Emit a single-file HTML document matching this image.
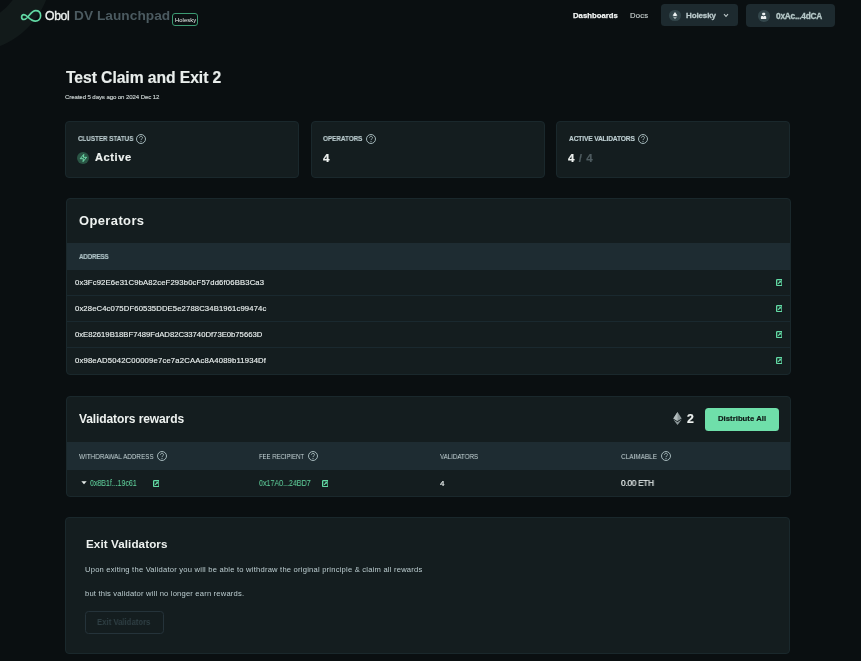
<!DOCTYPE html>
<html><head><meta charset="utf-8">
<style>
*{margin:0;padding:0;box-sizing:border-box}
html,body{width:861px;height:661px;overflow:hidden;background:#0a0f11;font-family:"Liberation Sans",sans-serif;color:#e6ecea}
.abs{position:absolute}
.arc{position:absolute;left:0;top:0;width:70px;height:70px;background:radial-gradient(circle at -31px -31px, rgba(0,0,0,0) 53px, #121a1a 54px, #121a1a 82.5px, rgba(0,0,0,0) 83.5px)}
.t{position:absolute;white-space:nowrap;line-height:1;will-change:transform}
.card{position:absolute;background:#141d1f;border:1px solid #1a282c;border-radius:4px}
.q{position:absolute;width:9.8px;height:9.8px;border:1px solid #b4c4c6;border-radius:50%}
.q:after{content:"?";position:absolute;left:0;right:0;top:1.2px;text-align:center;font-size:6.5px;line-height:1;color:#b4c4c6}
.thead{position:absolute;background:#1e2c32}
.sep{position:absolute;height:1px;background:#1a292f}
.ext{position:absolute;width:6.6px;height:6.6px;border:1.2px solid #5fd8a0;border-radius:1px}
.ext:after{content:"";position:absolute;left:0.3px;top:1.9px;width:4px;height:1.1px;background:#5fd8a0;transform:rotate(-45deg)}
</style></head><body>
<div class="arc"></div>

<svg class="abs" style="left:18px;top:6px" width="28" height="20" viewBox="0 0 28 20">
<path d="M9.8 11 C12 8.6 14.3 4.7 17.6 4.7 C20.6 4.7 22.6 6.8 22.6 9.8 C22.6 12.9 20.4 15.1 17.4 15.1 C14.2 15.1 12.2 13.2 9.8 11 C8.4 9.6 7.3 8.6 5.9 8.6 C4.5 8.6 3.6 9.7 3.6 11 C3.6 12.4 4.5 13.5 5.9 13.5 C7.4 13.5 8.5 12.4 9.8 11 Z" fill="none" stroke="#62d8a4" stroke-width="1.7"/>
</svg>
<div class="abs" style="left:172.2px;top:13px;width:26.2px;height:13.3px;border:1px solid #3c9a72;border-radius:3px"></div>

<div class="abs" style="left:661px;top:4.4px;width:77px;height:21.7px;background:#1d2a2f;border-radius:3.5px"></div>
<div class="abs" style="left:669px;top:9.6px;width:11.8px;height:11.8px;border-radius:50%;background:#33464b"></div>
<svg class="abs" style="left:672px;top:11px" width="6" height="9" viewBox="0 0 6 9"><path d="M3 0.9 L5.4 4.5 L3 5.2 L0.6 4.5Z" fill="#eef3f3"/><path d="M0.7 5.6 L3 6.3 L5.3 5.6 L3 8.2Z" fill="#a9b6b8"/></svg>
<svg class="abs" style="left:722.5px;top:13px" width="6" height="5" viewBox="0 0 6 5"><path d="M1 1.2 L3 3.4 L5 1.2" fill="none" stroke="#b9c5c6" stroke-width="1.1"/></svg>
<div class="abs" style="left:746px;top:4.4px;width:88.5px;height:22.6px;background:#1d2a2f;border-radius:4px"></div>
<div class="abs" style="left:758.2px;top:10.2px;width:11.5px;height:11.5px;border-radius:50%;background:#33464b"></div>
<svg class="abs" style="left:760px;top:12px" width="8" height="8" viewBox="0 0 8 8"><rect x="2.2" y="0.8" width="3" height="2.4" rx="0.8" fill="#e9efef"/><path d="M0.9 7 L0.9 5 Q0.9 4 1.9 4 L3 4 L3.55 4.7 L4.1 4 L5.2 4 Q6.2 4 6.2 5 L6.2 7 Z" fill="#e9efef"/></svg>

<div class="card" style="left:65px;top:121px;width:234px;height:57px"></div>
<svg class="abs" style="left:136.2px;top:134.0px" width="10" height="10" viewBox="0 0 10 10"><circle cx="5" cy="5" r="4.5" fill="none" stroke="#aabdc0" stroke-width="0.95"/><path d="M3.5 3.8 C3.5 2.9 4.2 2.3 5 2.3 C5.9 2.3 6.5 2.9 6.5 3.7 C6.5 4.8 5 4.9 5 6.1" fill="none" stroke="#aabdc0" stroke-width="0.9"/><circle cx="5" cy="7.6" r="0.55" fill="#aabdc0"/></svg>
<div class="abs" style="left:77.4px;top:152px;width:12px;height:12px;border-radius:50%;background:#2a5545"></div>
<svg class="abs" style="left:75px;top:150px" width="17" height="16" viewBox="0 0 17 16"><path d="M8.8 4.4 L5.2 8.7 L8.4 8.7 L8.05 11.6 L11.6 7.3 L8.4 7.3 Z" fill="none" stroke="#6fdcaa" stroke-width="1.0" stroke-linejoin="round"/></svg>
<div class="card" style="left:311px;top:121px;width:234px;height:57px"></div>
<svg class="abs" style="left:365.7px;top:134.0px" width="10" height="10" viewBox="0 0 10 10"><circle cx="5" cy="5" r="4.5" fill="none" stroke="#aabdc0" stroke-width="0.95"/><path d="M3.5 3.8 C3.5 2.9 4.2 2.3 5 2.3 C5.9 2.3 6.5 2.9 6.5 3.7 C6.5 4.8 5 4.9 5 6.1" fill="none" stroke="#aabdc0" stroke-width="0.9"/><circle cx="5" cy="7.6" r="0.55" fill="#aabdc0"/></svg>
<div class="card" style="left:556px;top:121px;width:234px;height:57px"></div>
<svg class="abs" style="left:638.0px;top:134.0px" width="10" height="10" viewBox="0 0 10 10"><circle cx="5" cy="5" r="4.5" fill="none" stroke="#aabdc0" stroke-width="0.95"/><path d="M3.5 3.8 C3.5 2.9 4.2 2.3 5 2.3 C5.9 2.3 6.5 2.9 6.5 3.7 C6.5 4.8 5 4.9 5 6.1" fill="none" stroke="#aabdc0" stroke-width="0.9"/><circle cx="5" cy="7.6" r="0.55" fill="#aabdc0"/></svg>

<div class="card" style="left:66px;top:198px;width:725px;height:176.5px"></div>
<div class="thead" style="left:67px;top:243.3px;width:723px;height:26.5px"></div>
<div class="sep" style="left:67px;top:295px;width:723px"></div>
<div class="sep" style="left:67px;top:321px;width:723px"></div>
<div class="sep" style="left:67px;top:347px;width:723px"></div>
<svg class="abs" style="left:775.6px;top:279.0px" width="6.6" height="7.2" viewBox="0 0 6.6 7.2"><rect x="0.65" y="0.65" width="5.3" height="5.9" rx="0.6" fill="none" stroke="#62d9a4" stroke-width="1.3"/><path d="M2.0 5.0 L4.4 2.5" stroke="#62d9a4" stroke-width="1.1"/><path d="M2.9 1.8 L5.0 1.8 L5.0 3.9 Z" fill="#62d9a4"/></svg>
<svg class="abs" style="left:775.6px;top:305.0px" width="6.6" height="7.2" viewBox="0 0 6.6 7.2"><rect x="0.65" y="0.65" width="5.3" height="5.9" rx="0.6" fill="none" stroke="#62d9a4" stroke-width="1.3"/><path d="M2.0 5.0 L4.4 2.5" stroke="#62d9a4" stroke-width="1.1"/><path d="M2.9 1.8 L5.0 1.8 L5.0 3.9 Z" fill="#62d9a4"/></svg>
<svg class="abs" style="left:775.6px;top:331.0px" width="6.6" height="7.2" viewBox="0 0 6.6 7.2"><rect x="0.65" y="0.65" width="5.3" height="5.9" rx="0.6" fill="none" stroke="#62d9a4" stroke-width="1.3"/><path d="M2.0 5.0 L4.4 2.5" stroke="#62d9a4" stroke-width="1.1"/><path d="M2.9 1.8 L5.0 1.8 L5.0 3.9 Z" fill="#62d9a4"/></svg>
<svg class="abs" style="left:775.6px;top:357.0px" width="6.6" height="7.2" viewBox="0 0 6.6 7.2"><rect x="0.65" y="0.65" width="5.3" height="5.9" rx="0.6" fill="none" stroke="#62d9a4" stroke-width="1.3"/><path d="M2.0 5.0 L4.4 2.5" stroke="#62d9a4" stroke-width="1.1"/><path d="M2.9 1.8 L5.0 1.8 L5.0 3.9 Z" fill="#62d9a4"/></svg>

<div class="card" style="left:66px;top:395.7px;width:725px;height:101px"></div>
<div class="thead" style="left:67px;top:442.2px;width:723px;height:27.8px"></div>
<svg class="abs" style="left:672.5px;top:412px" width="9" height="13" viewBox="0 0 9 13"><path d="M4.5 0 L8.7 6.6 L4.5 9 L0.3 6.6Z" fill="#8c9799"/><path d="M4.5 0 L4.5 9 L0.3 6.6Z" fill="#b3bdbe"/><path d="M0.3 7.5 L4.5 10 L8.7 7.5 L4.5 13Z" fill="#8c9799"/></svg>
<div class="abs" style="left:705.3px;top:407.9px;width:73.5px;height:23.2px;background:#6fdfaa;border-radius:3.5px"></div>
<svg class="abs" style="left:157.3px;top:451.4px" width="10" height="10" viewBox="0 0 10 10"><circle cx="5" cy="5" r="4.5" fill="none" stroke="#aabdc0" stroke-width="0.95"/><path d="M3.5 3.8 C3.5 2.9 4.2 2.3 5 2.3 C5.9 2.3 6.5 2.9 6.5 3.7 C6.5 4.8 5 4.9 5 6.1" fill="none" stroke="#aabdc0" stroke-width="0.9"/><circle cx="5" cy="7.6" r="0.55" fill="#aabdc0"/></svg>
<svg class="abs" style="left:308.0px;top:451.0px" width="10" height="10" viewBox="0 0 10 10"><circle cx="5" cy="5" r="4.5" fill="none" stroke="#aabdc0" stroke-width="0.95"/><path d="M3.5 3.8 C3.5 2.9 4.2 2.3 5 2.3 C5.9 2.3 6.5 2.9 6.5 3.7 C6.5 4.8 5 4.9 5 6.1" fill="none" stroke="#aabdc0" stroke-width="0.9"/><circle cx="5" cy="7.6" r="0.55" fill="#aabdc0"/></svg>
<svg class="abs" style="left:661.0px;top:451.0px" width="10" height="10" viewBox="0 0 10 10"><circle cx="5" cy="5" r="4.5" fill="none" stroke="#aabdc0" stroke-width="0.95"/><path d="M3.5 3.8 C3.5 2.9 4.2 2.3 5 2.3 C5.9 2.3 6.5 2.9 6.5 3.7 C6.5 4.8 5 4.9 5 6.1" fill="none" stroke="#aabdc0" stroke-width="0.9"/><circle cx="5" cy="7.6" r="0.55" fill="#aabdc0"/></svg>
<svg class="abs" style="left:81px;top:481px" width="6" height="3.5" viewBox="0 0 6 3.5"><path d="M0.3 0.3 L5.7 0.3 L3 3.2Z" fill="#e6ecea"/></svg>
<svg class="abs" style="left:152.7px;top:479.9px" width="6.6" height="7.2" viewBox="0 0 6.6 7.2"><rect x="0.65" y="0.65" width="5.3" height="5.9" rx="0.6" fill="none" stroke="#62d9a4" stroke-width="1.3"/><path d="M2.0 5.0 L4.4 2.5" stroke="#62d9a4" stroke-width="1.1"/><path d="M2.9 1.8 L5.0 1.8 L5.0 3.9 Z" fill="#62d9a4"/></svg>
<svg class="abs" style="left:321.6px;top:479.8px" width="6.6" height="7.2" viewBox="0 0 6.6 7.2"><rect x="0.65" y="0.65" width="5.3" height="5.9" rx="0.6" fill="none" stroke="#62d9a4" stroke-width="1.3"/><path d="M2.0 5.0 L4.4 2.5" stroke="#62d9a4" stroke-width="1.1"/><path d="M2.9 1.8 L5.0 1.8 L5.0 3.9 Z" fill="#62d9a4"/></svg>

<div class="card" style="left:65px;top:517px;width:725px;height:137px"></div>
<div class="abs" style="left:85.2px;top:610.5px;width:78.6px;height:23.5px;border:1px solid #25333a;border-radius:3.5px"></div>
<div class="t" id="obol" style="left:45.15px;top:9.66px;font-size:12.21px;color:#eef2f0;letter-spacing:-0.333px;font-weight:normal;-webkit-text-stroke:0.35px currentColor;">Obol</div>
<div class="t" id="dvl" style="left:74.04px;top:9.33px;font-size:13.66px;color:#4b5a60;letter-spacing:0.055px;font-weight:bold;">DV Launchpad</div>
<div class="t" id="badge" style="left:175.09px;top:18.08px;font-size:5.81px;color:#eef2f0;letter-spacing:0.100px;font-weight:normal;">Holesky</div>
<div class="t" id="dash" style="left:573.46px;top:11.78px;font-size:7.70px;color:#f2f5f4;letter-spacing:0.044px;font-weight:bold;-webkit-text-stroke:0.25px currentColor;">Dashboards</div>
<div class="t" id="docs" style="left:630.46px;top:11.78px;font-size:7.70px;color:#c7cfce;letter-spacing:0.233px;font-weight:normal;-webkit-text-stroke:0.15px currentColor;">Docs</div>
<div class="t" id="hol" style="left:686.44px;top:11.63px;font-size:7.99px;color:#b9c8ca;letter-spacing:-0.117px;font-weight:bold;-webkit-text-stroke:0.3px currentColor;">Holesky</div>
<div class="t" id="acct" style="left:775.87px;top:12.79px;font-size:8.28px;color:#b6c8c8;letter-spacing:-0.200px;font-weight:bold;-webkit-text-stroke:0.3px currentColor;">0xAc...4dCA</div>
<div class="t" id="title" style="left:65.90px;top:69.51px;font-size:15.70px;color:#e9eeec;letter-spacing:-0.065px;font-weight:bold;-webkit-text-stroke:0.15px currentColor;">Test Claim and Exit 2</div>
<div class="t" id="created" style="left:65.17px;top:94.33px;font-size:6.10px;color:#c9d1d0;letter-spacing:-0.109px;font-weight:normal;-webkit-text-stroke:0.15px currentColor;">Created 5 days ago on 2024 Dec 12</div>
<div class="t" id="l1" style="left:77.51px;top:135.09px;font-size:6.98px;color:#bccdd0;letter-spacing:0.031px;font-weight:bold;transform:scaleX(0.8919);transform-origin:0 0;-webkit-text-stroke:0.15px currentColor;">CLUSTER STATUS</div>
<div class="t" id="v1" style="left:95.23px;top:152.45px;font-size:11.05px;color:#eef2f0;letter-spacing:0.600px;font-weight:bold;-webkit-text-stroke:0.2px currentColor;">Active</div>
<div class="t" id="l2" style="left:322.51px;top:135.09px;font-size:6.98px;color:#bccdd0;letter-spacing:0.000px;font-weight:bold;transform:scaleX(0.9070);transform-origin:0 0;-webkit-text-stroke:0.15px currentColor;">OPERATORS</div>
<div class="t" id="v2" style="left:323.19px;top:151.96px;font-size:11.63px;color:#eef2f0;letter-spacing:0.000px;font-weight:bold;-webkit-text-stroke:0.2px currentColor;">4</div>
<div class="t" id="l3" style="left:568.53px;top:136.34px;font-size:6.69px;color:#bccdd0;letter-spacing:-0.175px;font-weight:bold;-webkit-text-stroke:0.15px currentColor;">ACTIVE VALIDATORS</div>
<div class="t" id="v3" style="left:568.20px;top:152.98px;font-size:11.48px;color:#eef2f0;letter-spacing:0.550px;font-weight:bold;-webkit-text-stroke:0.2px currentColor;">4 <span style="color:#4f5c60">/ 4</span></div>
<div class="t" id="ops" style="left:79.09px;top:214.75px;font-size:12.94px;color:#eef2f0;letter-spacing:0.400px;font-weight:bold;">Operators</div>
<div class="t" id="addrh" style="left:78.94px;top:253.15px;font-size:7.27px;color:#b0c4c8;letter-spacing:-0.167px;font-weight:bold;transform:scaleX(0.8571);transform-origin:0 0;-webkit-text-stroke:0.15px currentColor;">ADDRESS</div>
<div class="t" id="a1" style="left:74.91px;top:279.38px;font-size:7.70px;color:#e9efee;letter-spacing:0.149px;font-weight:normal;-webkit-text-stroke:0.15px currentColor;">0x3Fc92E6e31C9bA82ceF293b0cF57dd6f06BB3Ca3</div>
<div class="t" id="a2" style="left:74.91px;top:305.38px;font-size:7.70px;color:#e9efee;letter-spacing:0.120px;font-weight:normal;-webkit-text-stroke:0.15px currentColor;">0x28eC4c075DF60535DDE5e2788C34B1961c99474c</div>
<div class="t" id="a3" style="left:74.91px;top:331.38px;font-size:7.70px;color:#e9efee;letter-spacing:0.002px;font-weight:normal;-webkit-text-stroke:0.15px currentColor;">0xE82619B18BF7489FdAD82C33740Df73E0b75663D</div>
<div class="t" id="a4" style="left:74.91px;top:357.38px;font-size:7.70px;color:#e9efee;letter-spacing:0.168px;font-weight:normal;-webkit-text-stroke:0.15px currentColor;">0x98eAD5042C00009e7ce7a2CAAc8A4089b11934Df</div>
<div class="t" id="vr" style="left:79.16px;top:412.89px;font-size:12.06px;color:#eef2f0;letter-spacing:-0.118px;font-weight:bold;">Validators rewards</div>
<div class="t" id="two" style="left:687.15px;top:413.36px;font-size:12.21px;color:#eef2f0;letter-spacing:0.000px;font-weight:bold;-webkit-text-stroke:0.2px currentColor;">2</div>
<div class="t" id="dist" style="left:718.46px;top:415.38px;font-size:7.70px;color:#0f1a17;letter-spacing:0.038px;font-weight:bold;-webkit-text-stroke:0.2px currentColor;">Distribute All</div>
<div class="t" id="h1" style="left:78.86px;top:453.18px;font-size:7.70px;color:#c8d7d9;letter-spacing:0.000px;font-weight:normal;transform:scaleX(0.8242);transform-origin:0 0;">WITHDRAWAL ADDRESS</div>
<div class="t" id="h2" style="left:259.47px;top:453.00px;font-size:7.56px;color:#c8d7d9;letter-spacing:-0.017px;font-weight:normal;transform:scaleX(0.7930);transform-origin:0 0;">FEE RECIPIENT</div>
<div class="t" id="h3" style="left:440.47px;top:453.00px;font-size:7.56px;color:#c8d7d9;letter-spacing:-0.022px;font-weight:normal;transform:scaleX(0.8213);transform-origin:0 0;">VALIDATORS</div>
<div class="t" id="h4" style="left:621.47px;top:453.00px;font-size:7.56px;color:#c8d7d9;letter-spacing:-0.075px;font-weight:normal;transform:scaleX(0.8643);transform-origin:0 0;">CLAIMABLE</div>
<div class="t" id="r1" style="left:90.39px;top:478.92px;font-size:8.72px;color:#62d39e;letter-spacing:-0.062px;font-weight:normal;transform:scaleX(0.8140);transform-origin:0 0;-webkit-text-stroke:0.05px currentColor;">0x8B1f...19c61</div>
<div class="t" id="r2" style="left:259.41px;top:478.86px;font-size:8.43px;color:#62d39e;letter-spacing:-0.031px;font-weight:normal;transform:scaleX(0.8475);transform-origin:0 0;-webkit-text-stroke:0.05px currentColor;">0x17A0...24BD7</div>
<div class="t" id="r3" style="left:440.44px;top:479.75px;font-size:7.99px;color:#e9efee;letter-spacing:0.000px;font-weight:normal;-webkit-text-stroke:0.2px currentColor;">4</div>
<div class="t" id="r4" style="left:621.41px;top:478.86px;font-size:8.43px;color:#e9efee;letter-spacing:-0.257px;font-weight:normal;transform:scaleX(0.9759);transform-origin:0 0;-webkit-text-stroke:0.2px currentColor;">0.00 ETH</div>
<div class="t" id="ev" style="left:86.19px;top:538.06px;font-size:11.63px;color:#eef2f0;letter-spacing:0.093px;font-weight:bold;">Exit Validators</div>
<div class="t" id="p1" style="left:84.77px;top:565.87px;font-size:7.60px;color:#bccdd0;letter-spacing:0.215px;font-weight:normal;">Upon exiting the Validator you will be able to withdraw the original principle &amp; claim all rewards</div>
<div class="t" id="p2" style="left:84.77px;top:589.69px;font-size:7.60px;color:#bccdd0;letter-spacing:0.191px;font-weight:normal;">but this validator will no longer earn rewards.</div>
<div class="t" id="evb" style="left:97.36px;top:617.75px;font-size:9.16px;color:#2f3f44;letter-spacing:-0.029px;font-weight:bold;transform:scaleX(0.8524);transform-origin:0 0;">Exit Validators</div>
</body></html>
